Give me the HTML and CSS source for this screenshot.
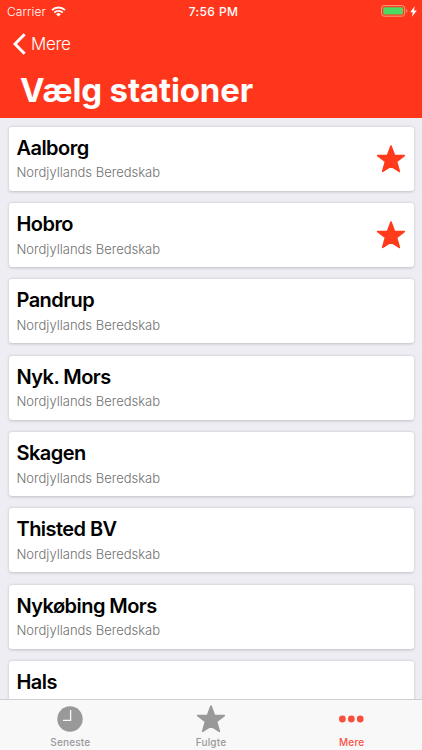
FILE: index.html
```html
<!DOCTYPE html>
<html lang="da">
<head>
  <meta charset="UTF-8">
  <meta name="viewport" content="width=device-width, initial-scale=1">
  <title>Vælg stationer</title>
  <link rel="stylesheet" href="styles.css">
</head>
<body>
  <svg width="0" height="0" class="symbols">
    <symbol id="star" viewBox="0 0 28 27">
      <path d="M14 1 17.3 9.900 26.8 10.200 19.300 16 22 25.400 14 20.200 6 25.400 8.700 16 1.200 10.200 10.700 9.900Z" fill="currentColor" stroke="currentColor" stroke-width="1.6" stroke-linejoin="round"/>
    </symbol>
  </svg>

  <!-- Header -->
  <header>
    <div class="status-bar">
      <div class="carrier">
        <span>Carrier</span>
        <svg width="15" height="11" viewBox="0 0 15 11" fill="none" stroke="#fff" stroke-width="1.9">
          <path d="M1 4.1a9.3 9.3 0 0 1 13 0M3.3 6.6a6 6 0 0 1 8.4 0"/>
          <path d="M7.5 10.6 5.1 8.2a3.4 3.4 0 0 1 4.8 0Z" fill="#fff" stroke="none"/>
        </svg>
      </div>
      <div class="time">7:56 PM</div>
      <div class="battery">
        <svg width="27" height="12" viewBox="0 0 27 12">
          <rect x=".6" y=".6" width="23" height="10.6" rx="2.4" fill="none" stroke="#ff9c80" stroke-width="1"/>
          <rect x="2.2" y="2.2" width="19.8" height="7.4" rx="1" fill="#4cd964"/>
          <path d="M25.2 4v4c1.5-.7 1.5-3.3 0-4Z" fill="#ff9c80"/>
        </svg>
        <svg width="7" height="11" viewBox="0 0 7 11">
          <path d="M4.7.2.2 6.3H2.8L2 10.8 6.8 4.6H4Z" fill="#fff"/>
        </svg>
      </div>
    </div>
    <a class="back" href="#">
      <svg width="13" height="22" viewBox="0 0 13 22">
        <path d="M11.6 1.2 2 11l9.6 9.8" fill="none" stroke="#fff" stroke-width="3"/>
      </svg>
      <span>Mere</span>
    </a>
    <h1>Vælg stationer</h1>
  </header>

  <!-- Station list -->
  <main class="stations">
    <div class="card">
      <div><h2>Aalborg</h2><p>Nordjyllands Beredskab</p></div>
      <svg class="star"><use href="#star"/></svg>
    </div>
    <div class="card">
      <div><h2>Hobro</h2><p>Nordjyllands Beredskab</p></div>
      <svg class="star"><use href="#star"/></svg>
    </div>
    <div class="card">
      <div><h2>Pandrup</h2><p>Nordjyllands Beredskab</p></div>
    </div>
    <div class="card">
      <div><h2>Nyk. Mors</h2><p>Nordjyllands Beredskab</p></div>
    </div>
    <div class="card">
      <div><h2>Skagen</h2><p>Nordjyllands Beredskab</p></div>
    </div>
    <div class="card">
      <div><h2>Thisted BV</h2><p>Nordjyllands Beredskab</p></div>
    </div>
    <div class="card">
      <div><h2>Nykøbing Mors</h2><p>Nordjyllands Beredskab</p></div>
    </div>
    <div class="card">
      <div><h2>Hals</h2></div>
    </div>
  </main>

  <!-- Tab bar -->
  <nav>
    <a class="tab" href="#">
      <svg width="28" height="28" viewBox="0 0 28 28">
        <circle cx="14" cy="14" r="12.7" fill="currentColor"/>
        <path d="M14.6 5v10.3H7" fill="none" stroke="#f8f8f9" stroke-width="1.3"/>
      </svg>
      <span>Seneste</span>
    </a>
    <a class="tab" href="#">
      <svg width="30" height="28"><use href="#star"/></svg>
      <span>Fulgte</span>
    </a>
    <a class="tab active" href="#">
      <svg width="28" height="28" viewBox="0 0 28 28" fill="currentColor">
        <circle cx="4.4" cy="14" r="3.4"/>
        <circle cx="13.3" cy="14" r="3.4"/>
        <circle cx="22.2" cy="14" r="3.4"/>
      </svg>
      <span>Mere</span>
    </a>
  </nav>
</body>
</html>
```

FILE: styles.css
```css
* {
  box-sizing: border-box;
}
body {
  margin: 0;
  height: 750px;
  display: flex;
  flex-direction: column;
  overflow: hidden;
  background: #eeedf4;
  font-family: Inter, "Liberation Sans", sans-serif;
  color: #000;
}
a {
  text-decoration: none;
}
svg {
  display: block;
  flex-shrink: 0;
}
.symbols {
  display: none;
}
header {
  height: 118.4px;
  flex-shrink: 0;
  background: #ff361c;
  color: #fff;
}
.status-bar {
  height: 22px;
  padding: 0 5px 0 7px;
  display: grid;
  grid-template-columns: 1fr auto 1fr;
  align-items: center;
  font-size: 12px;
}
.carrier {
  display: flex;
  align-items: center;
  gap: 5px;
  font-weight: 300;
  letter-spacing: 0.1px;
}
.time {
  padding-left: 3px;
  font-weight: 500;
  letter-spacing: 0.4px;
}
.battery {
  display: flex;
  align-items: center;
  justify-content: flex-end;
  gap: 2px;
}
.back {
  height: 43px;
  padding-left: 13px;
  display: flex;
  align-items: center;
  gap: 5px;
  color: #fff;
  font-size: 17px;
  font-weight: 300;
  letter-spacing: -0.3px;
}
h1 {
  margin: 0;
  padding-left: 20px;
  font-size: 33px;
  line-height: 50px;
  font-weight: 700;
  letter-spacing: -0.15px;
}
.stations {
  flex: 1;
  min-height: 0;
  overflow: hidden;
  padding: 8.2px 8.5px 0;
  display: flex;
  flex-direction: column;
  gap: 12.35px;
}
.card {
  height: 64px;
  flex-shrink: 0;
  padding: 8px 8px 0;
  display: flex;
  justify-content: space-between;
  background: #fff;
  border-radius: 3px;
  box-shadow: 0 0.5px 3px rgba(0, 0, 0, 0.2);
}
.card h2 {
  margin: 0;
  font-size: 20px;
  line-height: 26px;
  font-weight: 600;
  letter-spacing: -0.55px;
}
.card p {
  margin: 2.6px 0 0;
  font-size: 13px;
  line-height: 18px;
  font-weight: 300;
  color: #707070;
}
.star {
  width: 30px;
  height: 28px;
  margin: 10.5px 0 0;
  color: #ff3b1c;
}
nav {
  height: 51px;
  flex-shrink: 0;
  display: grid;
  grid-template-columns: repeat(3, 1fr);
  background: #f8f8f9;
  border-top: 1px solid #cfcfd3;
}
.tab {
  padding-top: 5px;
  display: flex;
  flex-direction: column;
  align-items: center;
  color: #999;
  font-size: 10px;
  line-height: 12px;
  font-weight: 500;
  letter-spacing: 0.2px;
}
.tab span {
  margin-top: 3px;
}
.tab.active {
  color: #f9503e;
}
```
